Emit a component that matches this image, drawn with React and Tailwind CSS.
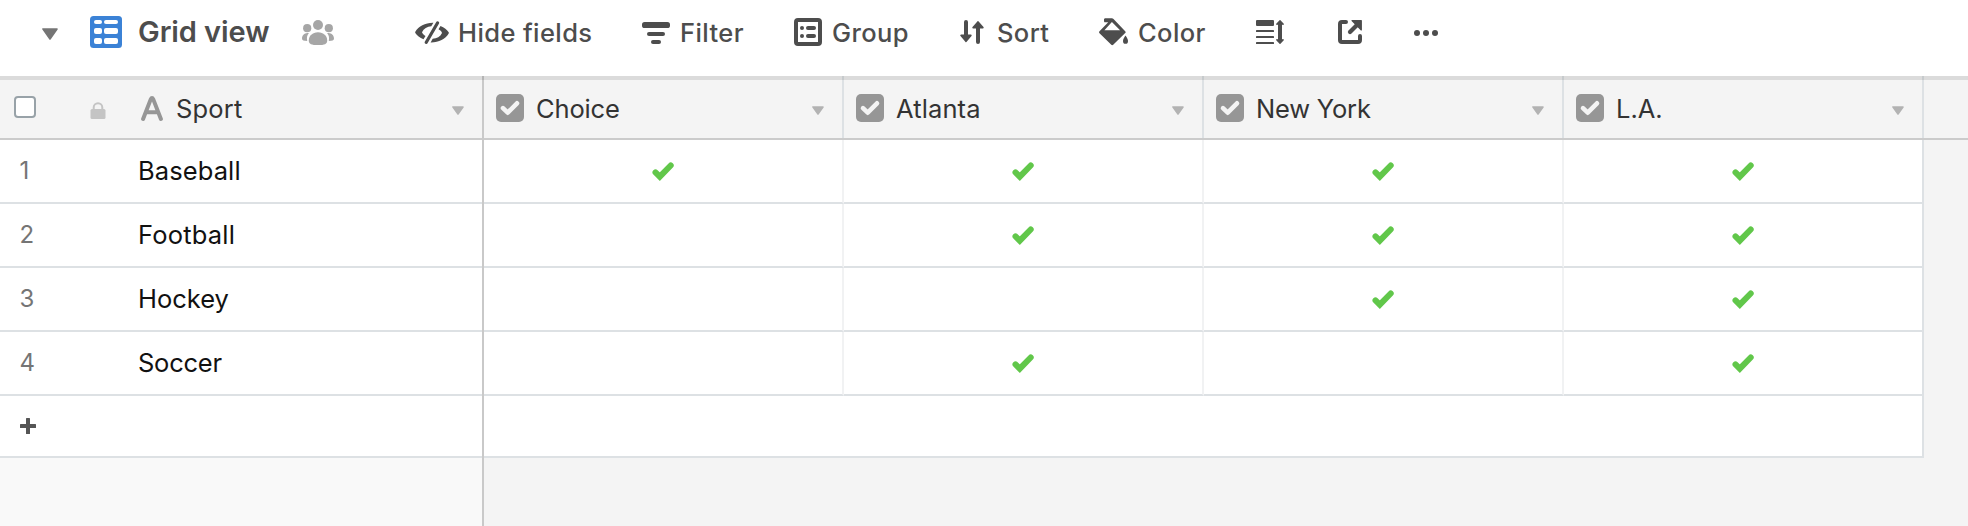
const columns = [
  { name: 'Choice', tracking: 'tracking-[-0.15px]' },
  { name: 'Atlanta', tracking: 'tracking-[0.12px]' },
  { name: 'New York', tracking: 'tracking-[-0.2px]' },
  { name: 'L.A.', tracking: 'tracking-normal' },
];

const rows = [
  { sport: 'Baseball', tracking: 'tracking-[0.1px]', checks: [true, true, true, true] },
  { sport: 'Football', tracking: 'tracking-[0.2px]', checks: [false, true, true, true] },
  { sport: 'Hockey', tracking: 'tracking-normal', checks: [false, false, true, true] },
  { sport: 'Soccer', tracking: 'tracking-[-0.25px]', checks: [false, true, false, true] },
];

const round = { strokeLinecap: 'round', strokeLinejoin: 'round' };

function GridIcon() {
  return (
    <svg width="32" height="32" viewBox="0 0 32 32" className="shrink-0">
      <rect width="32" height="32" rx="3.5" fill="#3b82d6" />
      <g fill="#fff">
        {[4, 12, 22].map((y, i) => (
          <g key={y}>
            <rect x="4" y={y} width="8" height={i === 0 ? 4 : 6} rx="2" />
            <rect x="14" y={y} width="14" height={i === 0 ? 4 : 6} rx="2" />
          </g>
        ))}
      </g>
    </svg>
  );
}

function PeopleIcon() {
  return (
    <svg width="32" height="26" viewBox="0 0 32 26" fill="#a6a6a6" className="shrink-0">
      <circle cx="16" cy="5" r="5" />
      <circle cx="5.2" cy="8.2" r="4.1" />
      <circle cx="26.8" cy="8.2" r="4.1" />
      <path d="M16 12.2c5.6 0 9.2 3.6 9.2 8.3 0 3.6-2.6 4.6-9.2 4.6s-9.2-1-9.2-4.6c0-4.700 3.600-8.300 9.200-8.300z" />
      <path d="M6.900 13.300C5 15 4.600 17.500 5.200 21 1.800 21 0 20.600 0 18.600c0-3 2.800-6.300 6.900-5.300z" />
      <path d="M25.100 13.300c1.900 1.700 2.300 4.200 1.700 7.700 3.400 0 5.200-.4 5.200-2.400 0-3-2.800-6.300-6.900-5.300z" />
    </svg>
  );
}

function HideIcon() {
  return (
    <svg width="34" height="24" viewBox="0 0 34 24" className="shrink-0">
      <path d="M22.500 2 11.300 21.300" stroke="#4d4d4d" strokeWidth="3.200" strokeLinecap="round" />
      <path fill="#4d4d4d" d="M18.400 1.700 16.300 5.300C12.300 5.600 8.600 7.500 7 11.200 7.400 12.700 8.900 14 10.500 14.900L8.500 18.200C4.800 16.700 1.900 14.300.3 11.900.1 11.500.1 11.100.3 10.700 3.600 5 10.500 1.500 18.400 1.700z" />
      <path fill="#4d4d4d" d="M15.600 21.400 17.700 17.800C21.700 17.500 25.400 15.600 27 11.900 26.600 10.400 25.100 9.100 23.500 8.200L25.500 4.900C29.200 6.400 32.100 8.800 33.700 11.200 33.900 11.600 33.900 12 33.700 12.400 30.400 17.900 23.500 21.600 15.600 21.400z" />
    </svg>
  );
}

function FilterIcon() {
  return (
    <svg width="28" height="22" viewBox="0 0 28 22" fill="#4d4d4d" className="shrink-0">
      <rect width="28" height="6" rx="2.600" />
      <rect x="5" y="10" width="18" height="4" rx="2" />
      <rect x="9" y="18" width="10" height="4" rx="2" />
    </svg>
  );
}

function GroupIcon() {
  return (
    <svg width="28" height="28" viewBox="0 0 28 28" fill="#4d4d4d" className="shrink-0">
      <rect x="2" y="2" width="24" height="24" rx="2" fill="none" stroke="#4d4d4d" strokeWidth="4" />
      <circle cx="8" cy="10" r="2" />
      <circle cx="8" cy="18" r="2" />
      <rect x="12" y="8" width="10" height="4" rx="2" />
      <rect x="12" y="16" width="10" height="4" rx="2" />
    </svg>
  );
}

function SortIcon() {
  return (
    <svg width="24" height="24" viewBox="0 0 24 24" fill="#4d4d4d" stroke="#4d4d4d" {...round} className="shrink-0">
      <path d="M6 2v16M18 22V6" strokeWidth="4" />
      <path d="M1.200 15.500h9.600L6 21.300zM13.200 7.500h9.600L18 2z" strokeWidth="1.800" />
    </svg>
  );
}

function ColorIcon() {
  return (
    <svg width="30" height="28" viewBox="0 0 30 28" className="shrink-0">
      <path fill="#4d4d4d" fillRule="evenodd" d="M6.200.2h6.600c.7 0 1.200.2 1.700.7L26.200 13.200c.6.600.6 1.300 0 1.900L14.200 26.800c-.6.600-1.300.6-1.900 0L.5 15.200c-.6-.6-.6-1.300 0-1.900L9.200 4.300H6.200C5 4.300 5 3.300 5 2.200 5 1.200 5 .2 6.200.2zM12.900 3.900 5.400 12.200H21.100z" />
      <path fill="#4d4d4d" d="M26.500 17.600c1.500 2.200 2.500 3.800 2.500 5.300a2.500 2.900 0 0 1-5 0c0-1.500 1-3.100 2.500-5.300z" />
    </svg>
  );
}

function RowHeightIcon() {
  return (
    <svg width="28" height="26" viewBox="0 0 28 26" fill="#4d4d4d" className="shrink-0">
      <rect y="1" width="18" height="6" rx="1" />
      <rect y="11" width="18" height="2" rx="0.600" />
      <rect y="17" width="18" height="2" rx="0.600" />
      <rect y="23" width="18" height="2" rx="0.600" />
      <path d="M24 5v16" stroke="#4d4d4d" strokeWidth="4" />
      <path d="M20.700 5.200h6.600L24 1.700zM20.700 20.800h6.600L24 24.300z" stroke="#4d4d4d" strokeWidth="1.300" {...round} />
    </svg>
  );
}

function ShareIcon() {
  return (
    <svg width="24" height="24" viewBox="0 0 24 24" fill="none" stroke="#4d4d4d" className="shrink-0">
      <path d="M8 2H4a2 2 0 0 0-2 2v16a2 2 0 0 0 2 2h16a2 2 0 0 0 2-2v-4" strokeWidth="4" {...round} />
      <path d="M12 12 19 5" strokeWidth="4.200" strokeLinecap="round" />
      <path d="M14 .7h9.300V10z" fill="#4d4d4d" strokeWidth="1.200" {...round} />
    </svg>
  );
}

function DotsIcon() {
  return (
    <svg width="24" height="6" viewBox="0 0 24 6" fill="#4d4d4d" className="shrink-0">
      <circle cx="3" cy="3" r="3" />
      <circle cx="12" cy="3" r="3" />
      <circle cx="21" cy="3" r="3" />
    </svg>
  );
}

function Caret({ large }) {
  return large ? (
    <svg width="16" height="12" viewBox="0 0 16 12" className="shrink-0">
      <path d="M1 1h14L8 11z" fill="#757575" stroke="#757575" strokeWidth="1.600" strokeLinejoin="round" />
    </svg>
  ) : (
    <svg width="12" height="9" viewBox="0 0 12 9" className="shrink-0">
      <path d="M1 1h10L6 8z" fill="#b3b3b3" stroke="#b3b3b3" strokeWidth="1.600" strokeLinejoin="round" />
    </svg>
  );
}

function LockIcon() {
  return (
    <svg width="16" height="17" viewBox="0 0 16 17" className="shrink-0">
      <rect x="0.500" y="7" width="15" height="10" rx="1.500" fill="#c4c4c4" />
      <path d="M3.700 8V5.600a4.300 4.300 0 0 1 8.600 0V8" fill="none" stroke="#c4c4c4" strokeWidth="2" />
    </svg>
  );
}

function TextFieldIcon() {
  return (
    <svg width="22" height="26" viewBox="0 0 22 26" fill="none" stroke="#969696" strokeWidth="4" {...round} className="shrink-0">
      <path d="M2.100 23 9.700 3.400Q11 .8 12.300 3.400L19.900 23M6 16.300h10" />
    </svg>
  );
}

function CheckboxFieldIcon() {
  return (
    <svg width="28" height="28" viewBox="0 0 28 28" className="shrink-0">
      <rect width="28" height="28" rx="5" fill="#969696" />
      <path d="M7 14.200 11.700 18.700 21 9.300" fill="none" stroke="#f4f4f4" strokeWidth="4.600" {...round} />
    </svg>
  );
}

function GreenCheck() {
  return (
    <svg width="22" height="19" viewBox="0 0 22 19" className="shrink-0">
      <path d="M3.500 10.400 7.800 14.700 18.700 3.500" fill="none" stroke="#61c74a" strokeWidth="6" strokeLinecap="round" strokeLinejoin="miter" />
    </svg>
  );
}

function Toolbar() {
  const label = 'whitespace-nowrap text-[25.5px] leading-8 font-medium tracking-[0.4px] text-[#4d4d4d]';
  return (
    <div className="flex h-[76px] shrink-0 items-center bg-white pb-[10px] pl-[42px]">
      <div className="mt-[2px] flex"><Caret large /></div>
      <div className="mr-4 mb-[2px] ml-8 flex"><GridIcon /></div>
      <div className="mb-[3px] w-[164px] text-[29px] leading-9 font-semibold tracking-[-0.08px] whitespace-nowrap text-[#4d4d4d]">Grid view</div>
      <PeopleIcon />
      <div className="mr-2 ml-[81px] flex"><HideIcon /></div>
      <div className={`w-[185px] pl-px ${label}`}>Hide fields</div>
      <FilterIcon />
      <div className={`ml-[10px] w-[114px] ${label}`}>Filter</div>
      <div className="mb-[2px] flex"><GroupIcon /></div>
      <div className={`ml-[10px] w-[128px] ${label}`}>Group</div>
      <div className="mb-[2px] flex"><SortIcon /></div>
      <div className={`ml-[13px] w-[102px] ${label}`}>Sort</div>
      <div className="mb-[2px] flex"><ColorIcon /></div>
      <div className={`ml-[9px] w-[118px] ${label}`}>Color</div>
      <div className="mb-[2px] flex"><RowHeightIcon /></div>
      <div className="mb-[2px] ml-[54px] flex"><ShareIcon /></div>
      <div className="ml-[52px] flex"><DotsIcon /></div>
    </div>
  );
}

export default function App() {
  return (
    <div className="flex h-[526px] w-[1968px] flex-col overflow-hidden bg-white font-['Inter',sans-serif]">
      <Toolbar />
      <div className="relative flex flex-1">
        <div className="flex w-[484px] shrink-0 flex-col border-r-2 border-[#c9c9c9] bg-[#f9f9f9]">
          <div className="flex h-16 items-center border-b-2 border-[#cbcbcb] bg-[#f4f4f4] pt-1 pr-[18px] pl-[14px]">
            <div className="mb-[4px] size-[22px] rounded-[4px] border-2 border-[#98a2a8] bg-white" />
            <div className="mt-[3px] ml-[54px] flex"><LockIcon /></div>
            <div className="ml-[35px] flex"><TextFieldIcon /></div>
            <span className="ml-[13px] text-[25.5px] leading-8 tracking-[0.2px] text-[#333]">Sport</span>
            <div className="mt-[3px] ml-auto flex"><Caret /></div>
          </div>
          {rows.map((row, i) => (
            <div key={row.sport} className="flex h-16 items-center border-b-2 border-[#dde1e4] bg-white">
              <span className="w-[138px] pl-[19.500px] text-[24px] leading-8 text-[#757575]">{i + 1}</span>
              <span className={`text-[25.5px] leading-8 text-[#111] ${row.tracking}`}>{row.sport}</span>
            </div>
          ))}
          <div className="flex h-[62px] items-center border-b-2 border-[#dde1e4] bg-white pl-5">
            <svg width="16" height="16" viewBox="0 0 16 16" fill="#555">
              <rect x="6" width="4" height="16" rx="0.500" />
              <rect y="6" width="16" height="4" rx="0.500" />
            </svg>
          </div>
        </div>

        <div className="flex flex-1 flex-col bg-[#f4f4f4]">
          <div className="flex h-16 border-b-2 border-[#cbcbcb]">
            {columns.map((col) => (
              <div key={col.name} className="flex w-[360px] items-center border-r-2 border-[#dde1e4] pt-1 pr-[18px] pl-3">
                <div className="mb-[2px] flex"><CheckboxFieldIcon /></div>
                <span className={`ml-3 text-[25.5px] leading-8 text-[#333] ${col.tracking}`}>{col.name}</span>
                <div className="mt-[3px] ml-auto flex"><Caret /></div>
              </div>
            ))}
          </div>
          {rows.map((row) => (
            <div key={row.sport} className="flex h-16">
              {row.checks.map((checked, i) => (
                <div
                  key={columns[i].name}
                  className="flex w-[360px] items-center justify-center border-r-2 border-b-2 border-r-[#f1f2f3] border-b-[#dde1e4] bg-white last:border-r-[#dde1e4]"
                >
                  {checked && <GreenCheck />}
                </div>
              ))}
            </div>
          ))}
          <div className="h-[62px] w-[1440px] border-r-2 border-b-2 border-[#dde1e4] bg-white" />
        </div>
        <div className="pointer-events-none absolute inset-x-0 top-0 h-1 bg-black/10" />
      </div>
    </div>
  );
}
